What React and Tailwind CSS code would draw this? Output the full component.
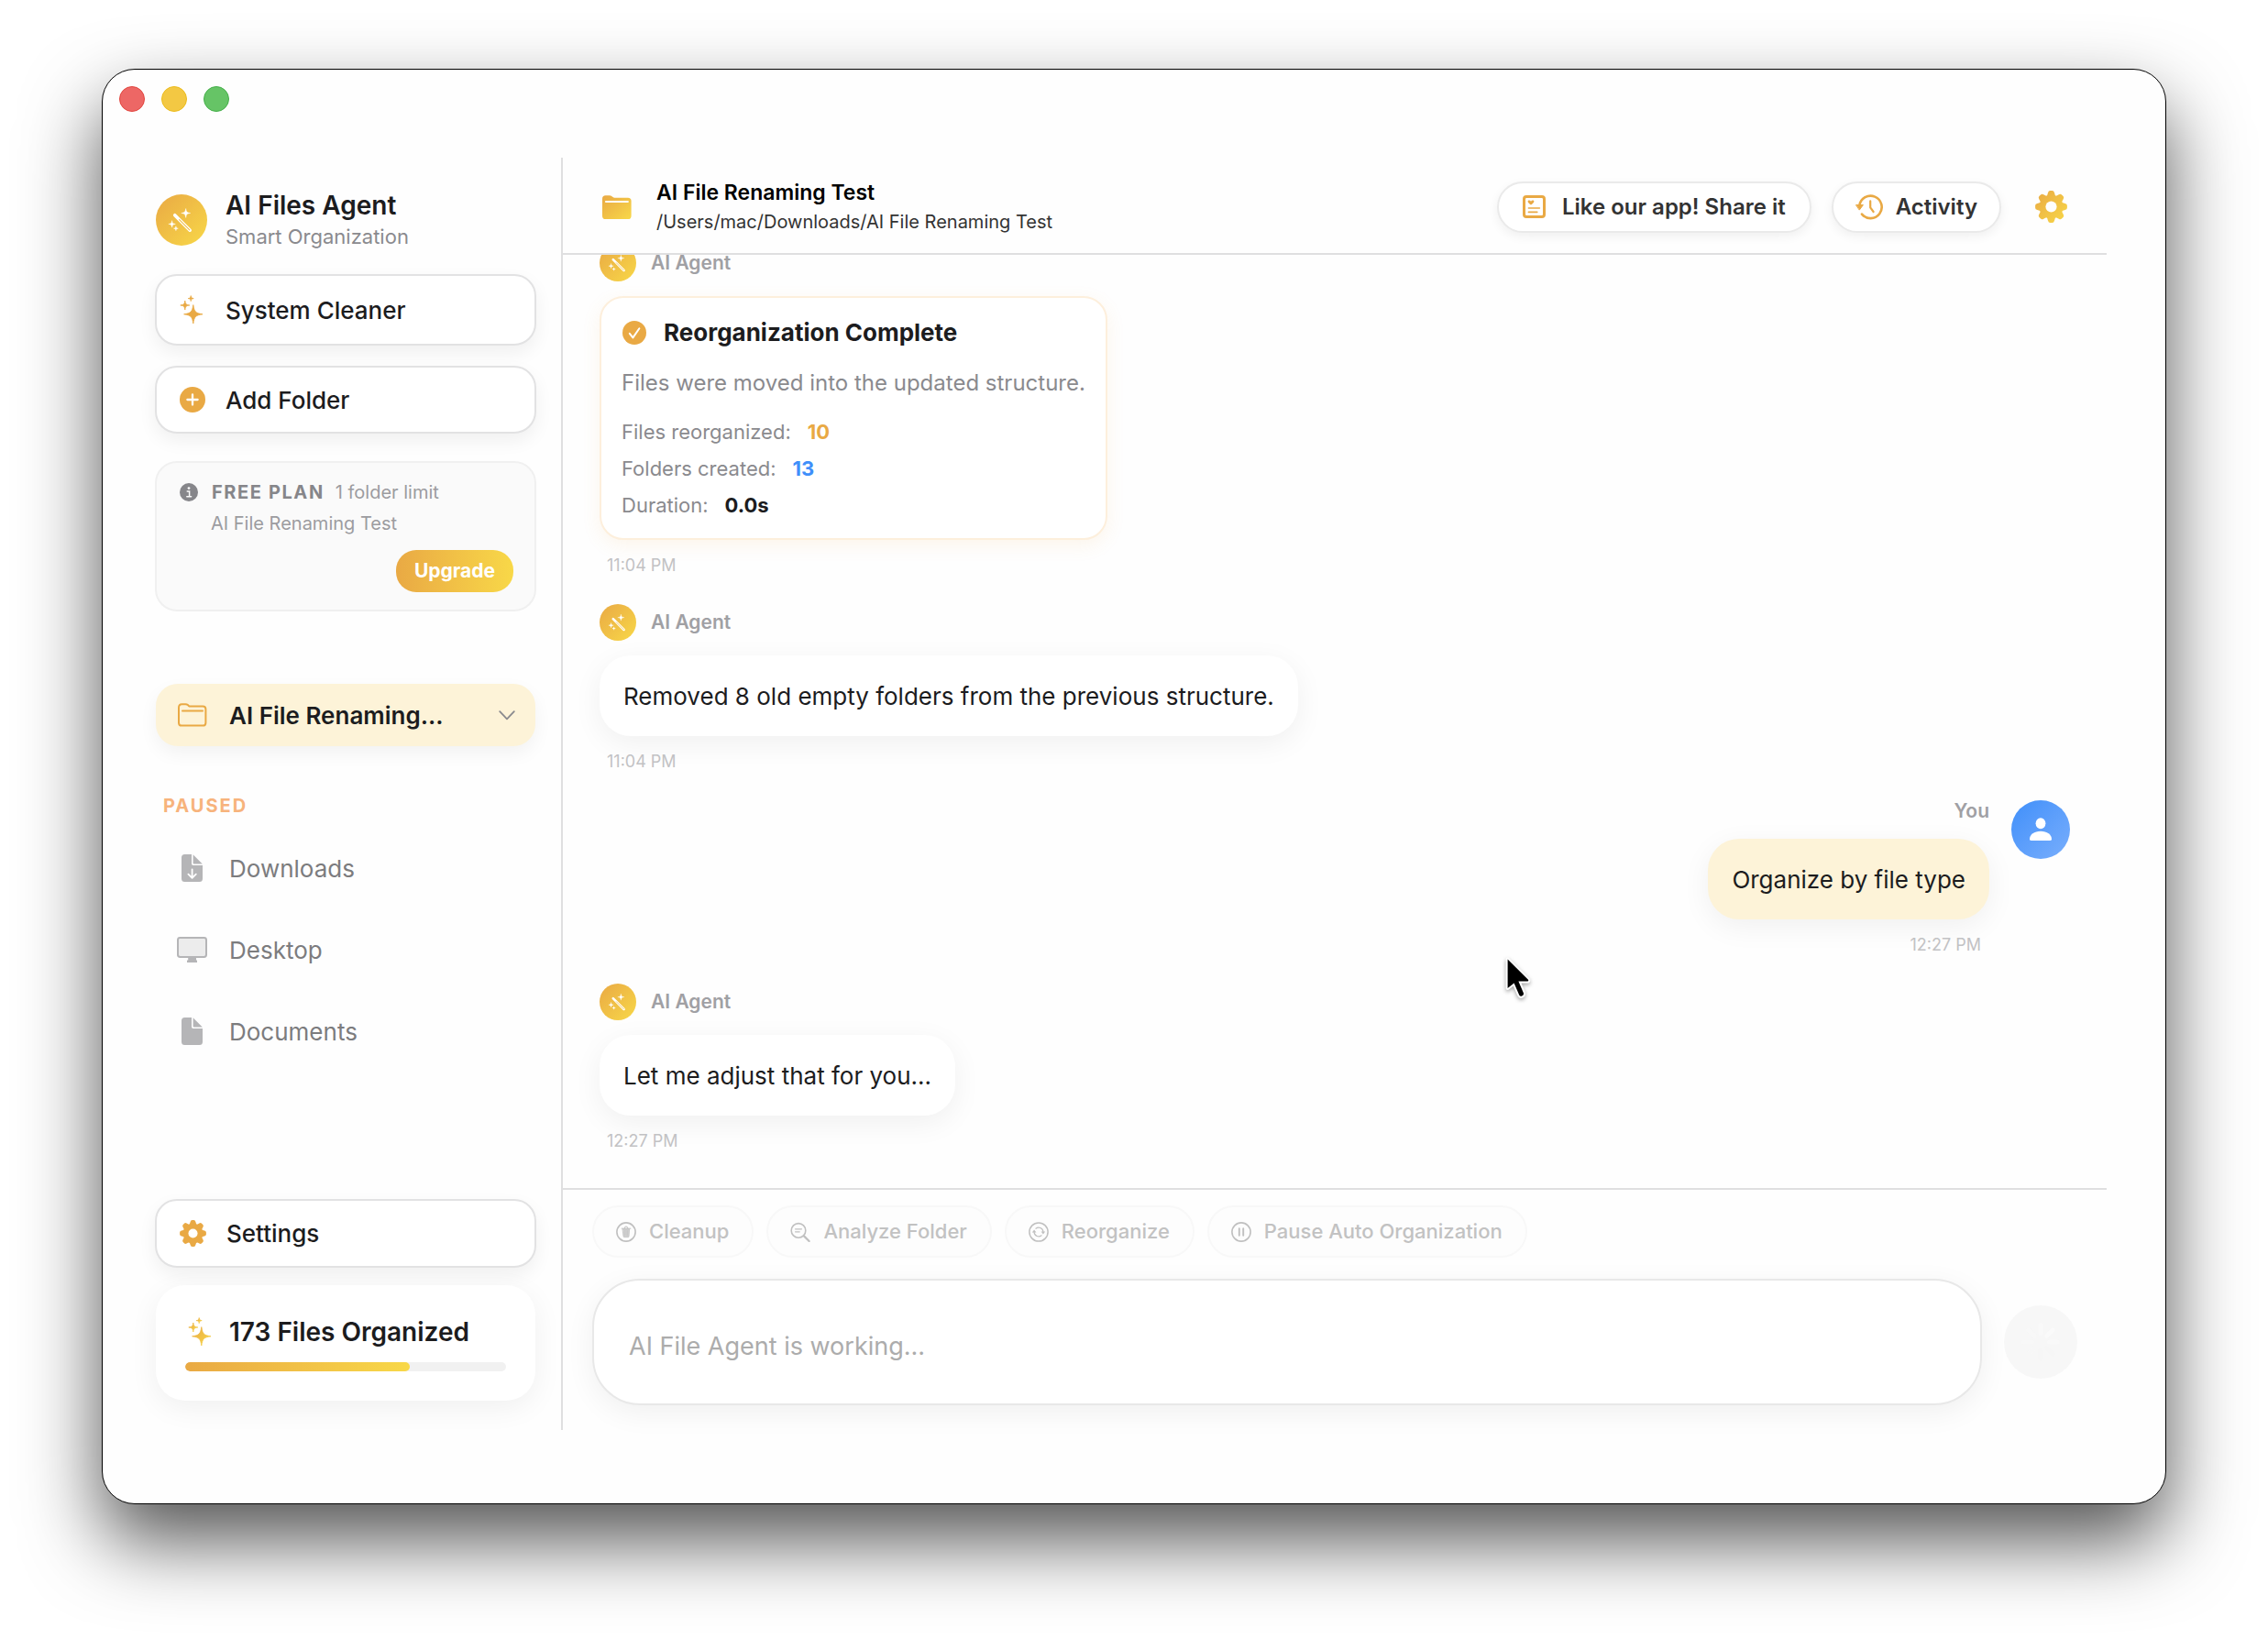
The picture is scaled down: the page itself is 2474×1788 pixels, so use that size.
import React from 'react';

const ORANGE = '#e9a944';

function Defs() {
  return (
    <svg width="0" height="0" className="absolute" aria-hidden="true">
      <defs>
        <linearGradient id="gold" x1="0" y1="0" x2="1" y2="1">
          <stop offset="0" stopColor="#e9a944" />
          <stop offset="1" stopColor="#f8d848" />
        </linearGradient>
      </defs>
    </svg>
  );
}

function star(cx, cy, r) {
  const a = r * 0.12;
  const b = r * 0.24;
  return `M${cx} ${cy - r}C${cx + a} ${cy - b} ${cx + b} ${cy - a} ${cx + r} ${cy}C${cx + b} ${cy + a} ${cx + a} ${cy + b} ${cx} ${cy + r}C${cx - a} ${cy + b} ${cx - b} ${cy + a} ${cx - r} ${cy}C${cx - b} ${cy - a} ${cx - a} ${cy - b} ${cx} ${cy - r}Z`;
}

function Sparkles({ fill }) {
  return (
    <svg width="26" height="32" viewBox="0 0 26 32" fill={fill} stroke={fill} strokeWidth="0.8" strokeLinejoin="round" aria-hidden="true">
      <path d={star(5.8, 11, 5)} />
      <path d={star(12.2, 3.6, 3)} />
      <path d={star(14.8, 20.8, 10.2)} />
    </svg>
  );
}

function WandAvatar({ size }) {
  return (
    <svg width={size} height={size} viewBox="0 0 56 56" className="shrink-0" aria-hidden="true">
      <circle cx="28" cy="28" r="28" fill="url(#gold)" />
      <g fill="#fff" stroke="#fff" strokeWidth="0.5" strokeLinejoin="round">
        <path d={star(32.7, 20.5, 4.9)} />
        <path d={star(17.6, 32.4, 3.7)} />
        <path d={star(21.9, 37.2, 2.4)} />
      </g>
      <path d="M20.7 22.7 37.2 39.2" stroke="#fff" strokeWidth="3.6" strokeLinecap="round" />
      <path d="M25.6 27.6 36.8 38.8" stroke="#f0bd47" strokeWidth="1.1" strokeLinecap="round" />
    </svg>
  );
}

function Gear({ size, fill }) {
  const teeth = [0, 45, 90, 135, 180, 225, 270, 315];
  return (
    <svg width={size} height={size} viewBox="-15 -15 30 30" className="shrink-0" aria-hidden="true">
      <mask id={`gear-${size}`}>
        <g fill="#fff">
          <circle r="11.2" />
          {teeth.map((a) => (
            <path key={a} d="M-4.2 -9 L-3 -13 Q-2.5 -14.9 -1 -14.9 H1 Q2.5 -14.9 3 -13 L4.2 -9Z" transform={`rotate(${a})`} />
          ))}
        </g>
        <circle r="5.2" fill="#000" />
      </mask>
      <rect x="-15" y="-15" width="30" height="30" fill={fill} mask={`url(#gear-${size})`} />
    </svg>
  );
}

function PlusCircle() {
  return (
    <svg width="28" height="28" viewBox="0 0 28 28" aria-hidden="true">
      <circle cx="14" cy="14" r="14" fill={ORANGE} />
      <path d="M14 8.4V19.6M8.4 14H19.6" stroke="#fff" strokeWidth="2.3" strokeLinecap="round" />
    </svg>
  );
}

function InfoDot() {
  return (
    <svg width="20" height="20" viewBox="0 0 20 20" className="mr-[3px]" aria-hidden="true">
      <circle cx="10" cy="10" r="10" fill="#86868a" />
      <circle cx="10" cy="5.6" r="1.4" fill="#fafafa" />
      <path d="M8.2 8.9H10.6V14.6M7.8 14.8H12.6" stroke="#fafafa" strokeWidth="1.5" strokeLinecap="round" fill="none" />
    </svg>
  );
}

function FolderOutline() {
  return (
    <svg width="32" height="26" viewBox="0 0 32 26" fill="none" stroke={ORANGE} strokeWidth="2" strokeLinecap="round" strokeLinejoin="round" aria-hidden="true">
      <path d="M1 5V21.4Q1 24.6 4.2 24.6H27.2Q30.4 24.6 30.4 21.4V6.6Q30.4 3.6 27.2 3.6H13.6Q12.6 3.6 11.8 2.9L10.9 2.1Q9.8 1.2 8.4 1.2H4.4Q1 1.2 1 5Z" />
      <path d="M5 8.4H27" />
    </svg>
  );
}

function FolderFilled() {
  return (
    <svg width="32" height="26" viewBox="0 0 32 26" className="shrink-0" aria-hidden="true">
      <path d="M0 4Q0 .3 3.6 .3H7.8Q9.4 .3 10.5 1.2L11.6 2.1Q12.3 2.7 13.3 2.7H28Q31.6 2.7 31.6 6.2V22.4Q31.6 26 28 26H3.6Q0 26 0 22.4Z" fill="url(#gold)" />
      <path d="M4 7H27.8" stroke="#fff" strokeWidth="2.2" strokeLinecap="round" />
    </svg>
  );
}

function Doc({ arrow }) {
  return (
    <svg width="23" height="30" viewBox="0 0 23 30" aria-hidden="true">
      <path d="M3.5 0H11V10.2Q11 12 12.8 12H23V26.5Q23 30 19.5 30H3.5Q0 30 0 26.5V3.5Q0 0 3.5 0Z" fill="#b5b5b7" />
      <path d="M12.6.3 22.8 10.4H13.8Q12.6 10.4 12.6 9.2Z" fill="#b5b5b7" />
      {arrow && <path d="M11.6 16.4V25.4M7.4 21.6 11.6 25.8 15.8 21.6" stroke="#fff" strokeWidth="1.8" strokeLinecap="round" strokeLinejoin="round" fill="none" />}
    </svg>
  );
}

function Monitor() {
  return (
    <svg width="33" height="28" viewBox="0 0 33 28" aria-hidden="true">
      <path d="M12.2 22H21V25.6H22V28H11V25.6H12.2Z" fill="#b5b5b7" />
      <rect x="1" y="1" width="31" height="21" rx="2.4" fill="#ececec" stroke="#b5b5b7" strokeWidth="2" />
    </svg>
  );
}

function CheckCircle() {
  return (
    <svg width="26" height="26" viewBox="0 0 26 26" aria-hidden="true">
      <circle cx="13" cy="13" r="13" fill={ORANGE} />
      <path d="M7.8 13.8 11.4 18.4 18.4 8.2" fill="none" stroke="#fff" strokeWidth="2" strokeLinecap="round" strokeLinejoin="round" />
    </svg>
  );
}

function ShareCard() {
  return (
    <svg width="25" height="25" viewBox="0 0 25 25" fill={ORANGE} aria-hidden="true">
      <path fillRule="evenodd" d="M4 0H21Q25 0 25 4V21Q25 25 21 25H4Q0 25 0 21V4Q0 0 4 0ZM4.2 3Q3 3 3 4.2V20.8Q3 22 4.2 22H20.8Q22 22 22 20.8V4.2Q22 3 20.8 3Z" />
      <path d="M9 10.6C4.6 7.8 5.2 5.6 7 5.6Q8.3 5.6 9 6.8Q9.7 5.6 11 5.6C12.8 5.6 13.4 7.8 9 10.6Z" />
      <path d="M6.4 14H18.4M6.4 18.4H15.8" stroke={ORANGE} strokeWidth="1.6" strokeLinecap="round" />
    </svg>
  );
}

function History() {
  return (
    <svg width="30" height="28" viewBox="0 0 30 28" fill="none" stroke={ORANGE} strokeWidth="2.6" strokeLinecap="round" strokeLinejoin="round" aria-hidden="true">
      <path d="M4.4 12A12.2 12.2 0 1 1 7 21.6" />
      <path d="M16.2 7.4V14.4L19.6 19" strokeWidth="2.2" />
      <path d="M.8 11.6H8.4L4.5 16.8Z" fill={ORANGE} strokeWidth="1" />
    </svg>
  );
}

const chipIcon = { width: 22, height: 22, viewBox: '0 0 22 22', fill: 'none', stroke: '#c0c0c0', strokeWidth: 1.6, strokeLinecap: 'round', strokeLinejoin: 'round' };

function TrashCircle() {
  return (
    <svg {...chipIcon} aria-hidden="true">
      <circle cx="11" cy="11" r="10.1" />
      <path d="M7.4 7.8H14.6L14 15.8Q14 16.6 13.1 16.6H8.9Q8 16.6 8 15.8Z" fill="#d0d0d0" strokeWidth="0.8" />
      <path d="M6.2 7.2H15.8M9.2 6.8Q9.2 5 11 5Q12.8 5 12.8 6.8" strokeWidth="1" />
      <path d="M9.8 9.6V14.8M12.2 9.6V14.8" strokeWidth="0.6" />
    </svg>
  );
}

function AnalyzeGlass() {
  return (
    <svg {...chipIcon} aria-hidden="true">
      <circle cx="9" cy="9.4" r="7.8" />
      <path d="M15 15.4 20.6 21" strokeWidth="2.2" />
      <path d="M5.6 7.8H12.4M5.6 10.8H10.2" strokeWidth="1.3" />
    </svg>
  );
}

function CycleCircle() {
  return (
    <svg {...chipIcon} aria-hidden="true">
      <circle cx="11" cy="11" r="10.1" strokeWidth="1.5" />
      <path d="M7.9 7.2A4.9 4.9 0 0 1 15.9 10.6M14.1 14.8A4.9 4.9 0 0 1 6.1 11.4" strokeWidth="1.2" />
      <path d="M13.6 10.6H18.2L15.9 13.4ZM8.4 11.4H3.8L6.1 8.6Z" fill="#c0c0c0" stroke="none" />
    </svg>
  );
}

function PauseCircle() {
  return (
    <svg {...chipIcon} aria-hidden="true">
      <circle cx="11" cy="11" r="10.1" />
      <path d="M8.8 7.2V14.8M13.2 7.2V14.8" strokeWidth="1.9" />
    </svg>
  );
}

function Spinner() {
  const petals = [1, 0.9, 0.8, 0.1, 0.1, 0.3, 0.4, 0.5];
  return (
    <svg width="44" height="44" viewBox="-22 -22 44 44" aria-hidden="true">
      {petals.map((o, i) => (
        <rect key={i} x="-2.5" y="-21" width="5" height="14" rx="2.5" fill="#f9f9f9" opacity={o} transform={`rotate(${i * 45})`} />
      ))}
    </svg>
  );
}

function Pointer() {
  return (
    <svg width="36" height="54" viewBox="0 0 36 54" className="absolute left-[1530px] top-[967px] drop-shadow-[0_2px_2px_rgba(0,0,0,0.35)]" aria-hidden="true">
      <path d="M2.6 3.6V35L9.6 29.4 15.2 42.4Q16.2 44.4 18.2 43.6 20.6 42.4 20 40.4L14.4 27.6H24.6Q25.8 27 25 25.8Z" fill="#000" stroke="#fff" strokeWidth="4" strokeLinejoin="round" paintOrder="stroke" />
    </svg>
  );
}

function Bubble({ children, tone }) {
  const color = tone === 'user' ? 'bg-[#fdf3d8]' : 'bg-white';
  return (
    <p className={`flex h-[88px] items-center rounded-[34px] px-[26px] text-[26px] text-[#1c1c1e] shadow-[0_8px_32px_rgba(0,0,0,0.06)] ${color}`}>
      {children}
    </p>
  );
}

const timeClass = 'mt-4 text-lg leading-6 text-[#c2c2c4]';

function AgentMessage({ time, children }) {
  return (
    <article className="flex flex-col items-start">
      <header className="mb-4 flex items-center gap-4">
        <WandAvatar size={40} />
        <span className="text-[21px] font-semibold leading-6 text-[#a0a0a4]">AI Agent</span>
      </header>
      {children}
      <time className={`${timeClass} pl-2`}>{time}</time>
    </article>
  );
}

function Stat({ label, value, color }) {
  return (
    <div className="flex gap-[18px] text-[22px] leading-10">
      <dt className="text-[#8a8a8e]">{label}</dt>
      <dd className={`font-bold ${color}`}>{value}</dd>
    </div>
  );
}

const sideButton = 'flex w-full items-center rounded-3xl border-2 border-[#e2e2e3] bg-white pl-[25px] text-[26px] font-medium text-[#1c1c1e] shadow-[0_8px_20px_rgba(0,0,0,0.06)]';

function PausedItem({ icon, label }) {
  return (
    <li>
      <button className="flex h-[68px] w-full items-center text-left text-[26px] text-[#7c7c7e]">
        <span className="flex w-[81px] justify-center">{icon}</span>
        {label}
      </button>
    </li>
  );
}

function Sidebar() {
  return (
    <aside className="flex w-[502px] shrink-0 flex-col border-r-2 border-[#dfdfe0] pb-8 pl-[57px] pr-[27px] pt-[34px]">
      <div className="flex items-center gap-5 pl-px">
        <WandAvatar size={56} />
        <div>
          <h1 className="text-[28px] font-semibold leading-9 text-[#1c1c1e]">AI Files Agent</h1>
          <p className="text-[22px] leading-8 text-[#8a8a8e]">Smart Organization</p>
        </div>
      </div>
      <button className={`${sideButton} mt-[25px] h-[78px] gap-6`}>
        <Sparkles fill={ORANGE} />
        System Cleaner
      </button>
      <button className={`${sideButton} mt-[22px] h-[74px] gap-[22px]`}>
        <PlusCircle />
        Add Folder
      </button>

      <section className="mt-[30px] rounded-3xl border-2 border-[#f0f0f0] bg-[#fafafa] pb-[19px] pl-[25px] pr-[23px] pt-[15px]">
        <div className="flex items-center gap-3 text-xl leading-[34px]">
          <InfoDot />
          <strong className="font-bold tracking-[0.08em] text-[#86868a]">FREE PLAN</strong>
          <span className="text-[#9c9ca0]">1 folder limit</span>
        </div>
        <p className="pl-[34px] text-xl leading-[34px] text-[#9c9ca0]">AI File Renaming Test</p>
        <div className="mt-3 flex justify-end">
          <button className="h-[46px] rounded-[22px] bg-linear-to-r from-[#e9a944] to-[#f8d848] px-5 text-[21px] font-bold text-white">Upgrade</button>
        </div>
      </section>

      <button className="mx-px mt-[79px] flex h-[68px] items-center rounded-3xl bg-[#fdf3d8] pl-6 pr-[22px] text-left text-[26px] font-semibold text-[#1c1c1e] shadow-[0_8px_20px_rgba(0,0,0,0.05)]">
        <FolderOutline />
        <span className="flex-1 pl-6">AI File Renaming...</span>
        <svg width="18" height="11" viewBox="0 0 18 11" fill="none" stroke="#8a8a8e" strokeWidth="1.8" strokeLinecap="round" strokeLinejoin="round" aria-hidden="true">
          <path d="M1.2 1.2 9 9.4 16.8 1.2" />
        </svg>
      </button>

      <h2 className="mt-[49px] pl-[9px] text-xl font-bold leading-8 tracking-widest text-[#f7b37c]">PAUSED</h2>
      <ul className="mb-8 mt-[18px] flex flex-col gap-[21px]">
        <PausedItem icon={<Doc arrow />} label="Downloads" />
        <PausedItem icon={<Monitor />} label="Desktop" />
        <PausedItem icon={<Doc />} label="Documents" />
      </ul>

      <button className={`${sideButton} mt-auto h-[75px] gap-[22px]`}>
        <Gear size={29} fill={ORANGE} />
        Settings
      </button>
      <section className="mx-px mt-[19px] rounded-[32px] bg-white px-8 pb-8 pt-[33px] shadow-[0_8px_32px_rgba(0,0,0,0.06)]">
        <div className="flex items-center gap-[19px] pl-[3px] text-[28px] font-semibold leading-9 text-[#1c1c1e]">
          <Sparkles fill="url(#gold)" />
          <span>173 Files Organized</span>
        </div>
        <div className="mt-[15px] h-[10px] overflow-hidden rounded-full bg-[#f1f1f1]">
          <div className="h-full w-[70%] rounded-full bg-linear-to-r from-[#e9a944] to-[#f8d848]" />
        </div>
      </section>
    </aside>
  );
}

const headButton = 'flex h-14 items-center rounded-[28px] border-2 border-[#eaeaea] bg-white text-2xl font-semibold text-[#333] shadow-[0_4px_12px_rgba(0,0,0,0.06)]';

function TopBar() {
  return (
    <header className="flex h-[106px] shrink-0 items-center border-b-2 border-[#dfdfe0] pl-[43px] pr-[43px] pt-[3px]">
      <FolderFilled />
      <div className="flex-1 pl-[27px]">
        <h2 className="text-[23px] font-semibold leading-8 text-black">AI File Renaming Test</h2>
        <p className="text-xl leading-8 text-[#333]">/Users/mac/Downloads/AI File Renaming Test</p>
      </div>
      <button className={`${headButton} gap-[18px] pl-[26px] pr-[26px]`}>
        <ShareCard />
        Like our app! Share it
      </button>
      <button className={`${headButton} ml-[22px] gap-3.5 px-6`}>
        <History />
        Activity
      </button>
      <button aria-label="Settings" className="ml-[37px]">
        <Gear size={35} fill="url(#gold)" />
      </button>
    </header>
  );
}

function Conversation() {
  return (
    <section className="flex min-h-0 grow basis-0 flex-col justify-end gap-[30px] overflow-hidden px-10 pb-[39px]">
      <AgentMessage time="11:04 PM">
        <div className="rounded-[26px] border-2 border-[#fdefdc] bg-white px-[22px] pb-4 pt-5 shadow-[0_6px_20px_rgba(233,169,68,0.10)]">
          <h3 className="flex items-center gap-[19px] pl-px text-[26px] font-bold leading-9 text-[#1c1c1e]">
            <CheckCircle />
            Reorganization Complete
          </h3>
          <p className="mt-[19px] text-2xl leading-9 text-[#8a8a8e]">Files were moved into the updated structure.</p>
          <dl className="mt-[15px]">
            <Stat label="Files reorganized:" value="10" color="text-[#e9a944]" />
            <Stat label="Folders created:" value="13" color="text-[#3f8ffa]" />
            <Stat label="Duration:" value="0.0s" color="text-[#1c1c1e]" />
          </dl>
        </div>
      </AgentMessage>

      <AgentMessage time="11:04 PM">
        <Bubble>Removed 8 old empty folders from the previous structure.</Bubble>
      </AgentMessage>

      <article className="flex items-start justify-end gap-6">
        <div className="flex flex-col items-end">
          <span className="mb-[18px] text-[21px] font-semibold leading-6 text-[#a0a0a4]">You</span>
          <Bubble tone="user">Organize by file type</Bubble>
          <time className={`${timeClass} pr-[9px]`}>12:27 PM</time>
        </div>
        <span className="flex size-16 items-center justify-center rounded-full bg-linear-to-br from-[#3f8ffa] to-[#78aefc]">
          <svg width="24" height="26" viewBox="0 0 24 26" fill="#fff" aria-hidden="true">
            <ellipse cx="12" cy="6.2" rx="5.4" ry="6" />
            <path d="M0 23.4C0 18.4 5 14.8 12 14.8S24 18.4 24 23.4Q24 25 22 25H2Q0 25 0 23.4Z" />
          </svg>
        </span>
      </article>

      <AgentMessage time="12:27 PM">
        <Bubble>Let me adjust that for you...</Bubble>
      </AgentMessage>
    </section>
  );
}

function Chip({ icon, label }) {
  return (
    <button disabled className="flex h-[57px] items-center gap-3.5 rounded-full border-2 border-[#f8f8f8] bg-[#fdfdfd] pl-6 pr-[25px] text-[22px] font-medium text-[#c2c2c2]">
      {icon}
      {label}
    </button>
  );
}

function Composer() {
  return (
    <footer className="shrink-0 border-t-2 border-[#dfdfe0] px-8 pb-[27px] pt-[17px]">
      <div className="flex flex-wrap gap-[14px]">
        <Chip icon={<TrashCircle />} label="Cleanup" />
        <Chip icon={<AnalyzeGlass />} label="Analyze Folder" />
        <Chip icon={<CycleCircle />} label="Reorganize" />
        <Chip icon={<PauseCircle />} label="Pause Auto Organization" />
      </div>
      <div className="mt-[23px] flex items-center gap-6">
        <input
          type="text"
          disabled
          aria-label="Message"
          placeholder="AI File Agent is working..."
          className="h-[138px] min-w-0 flex-1 rounded-[52px] border-2 border-[#e8e8e8] bg-white px-[38px] pt-2 text-[27px] shadow-[0_8px_32px_rgba(0,0,0,0.06)] placeholder:text-[#acacac]"
        />
        <button disabled aria-label="Send" className="flex size-20 items-center justify-center rounded-full bg-[#f7f7f7]">
          <Spinner />
        </button>
      </div>
    </footer>
  );
}

export default function App() {
  return (
    <div className="flex min-h-screen flex-col bg-white px-[111px] pb-[147px] pt-[75px] font-['Inter',sans-serif]">
      <Defs />
      <main className="relative flex flex-1 flex-col rounded-[36px] border border-black bg-[#fefefe] shadow-[0_40px_84px_rgba(0,0,0,0.67)]">
        <div className="flex h-24 shrink-0 items-start gap-[18px] pl-[18px] pt-[18px]">
          <button aria-label="Close" className="size-7 rounded-full border border-[#e2463f] bg-[#ed6765]" />
          <button aria-label="Minimize" className="size-7 rounded-full border border-[#ecbc1c] bg-[#f3c843]" />
          <button aria-label="Zoom" className="size-7 rounded-full border border-[#45b04a] bg-[#66c466]" />
        </div>
        <div className="flex flex-1 pb-20 pr-16">
          <Sidebar />
          <div className="flex min-w-0 flex-1 flex-col">
            <TopBar />
            <Conversation />
            <Composer />
          </div>
        </div>
        <Pointer />
      </main>
    </div>
  );
}
